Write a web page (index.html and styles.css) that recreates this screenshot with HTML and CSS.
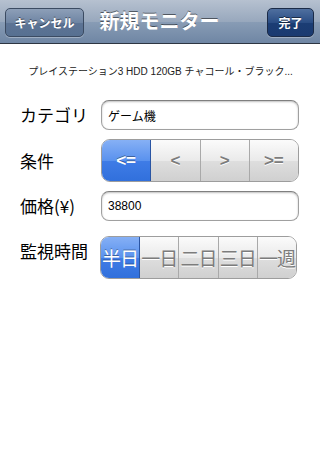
FILE: index.html
```html
<!DOCTYPE html>
<html lang="ja">
<head>
    <meta charset="UTF-8">
    <meta name="viewport" content="width=device-width, initial-scale=1.0">
    <title>新規モニター</title>
    <link rel="stylesheet" href="styles.css">
</head>
<body>
    <div class="navbar">
        <div class="nav-left">
            <button class="bar-button">キャンセル</button>
        </div>
        <div class="nav-title">新規モニター</div>
        <div class="nav-right">
            <button class="bar-button done">完了</button>
        </div>
    </div>

    <div class="product">プレイステーション3 HDD 120GB チャコール・ブラック...</div>

    <div class="form">
        <div class="row">
            <label class="label">カテゴリ</label>
            <input class="field" type="text" value="ゲーム機">
        </div>
        <div class="row">
            <label class="label">条件</label>
            <div class="segmented cond">
                <button class="seg selected">&lt;=</button>
                <button class="seg">&lt;</button>
                <button class="seg">&gt;</button>
                <button class="seg">&gt;=</button>
            </div>
        </div>
        <div class="row">
            <label class="label">価格(¥)</label>
            <input class="field" type="text" value="38800">
        </div>
        <div class="row top">
            <label class="label">監視時間</label>
            <div class="segmented period">
                <button class="seg selected">半日</button>
                <button class="seg">一日</button>
                <button class="seg">二日</button>
                <button class="seg">三日</button>
                <button class="seg">一週</button>
            </div>
        </div>
    </div>
</body>
</html>
```

FILE: styles.css
```css
* {
    box-sizing: border-box;
    margin: 0;
    padding: 0;
}

body {
    width: 320px;
    height: 460px;
    background: #ffffff;
    font-family: "Liberation Sans", "Noto Sans CJK JP", sans-serif;
    color: #000;
    overflow: hidden;
}

.navbar {
    height: 44px;
    display: grid;
    grid-template-columns: 1fr auto 1fr;
    align-items: center;
    padding: 0 6px 0 5px;
    background: linear-gradient(#b6c1d0 0%, #98a8bd 50%, #889cb5 51%, #6f86a4 100%);
    border-bottom: 1px solid #2d3642;
}

.nav-right {
    display: flex;
    justify-content: flex-end;
}

.nav-title {
    color: #fff;
    font-family: "Noto Sans CJK JP", sans-serif;
    font-weight: bold;
    font-size: 20px;
    text-shadow: 0 -1px 0 rgba(0, 0, 0, 0.5);
    padding-bottom: 2px;
}

.bar-button {
    height: 29px;
    width: 79px;
    border: 1px solid #3b4b62;
    border-radius: 5px;
    background: linear-gradient(#8d9fb8 0%, #6f85a3 50%, #5d7495 51%, #577091 100%);
    box-shadow: 0 1px 0 rgba(255, 255, 255, 0.3);
    color: #fff;
    font-family: "Noto Sans CJK JP", sans-serif;
    font-weight: bold;
    font-size: 12px;
    text-shadow: 0 -1px 0 rgba(0, 0, 0, 0.5);
    margin-top: 1px;
}

.bar-button.done {
    width: 47px;
    border-color: #1b2b47;
    background: linear-gradient(#4f6f9f 0%, #2a4d84 50%, #1b3d74 51%, #1a3a70 100%);
}

.product {
    height: 56px;
    line-height: 56px;
    text-align: center;
    font-family: "Liberation Sans", "Noto Sans CJK JP", sans-serif;
    font-size: 10px;
    color: #222;
    padding-left: 1px;
    white-space: nowrap;
}

.form {
    display: flex;
    flex-direction: column;
    gap: 9px;
    padding: 0 21px 0 20px;
}

.row {
    display: grid;
    grid-template-columns: 81px 1fr;
    align-items: center;
}

.row.top {
    align-items: start;
    margin-top: 6px;
}

.row.top .label {
    margin-top: 3px;
}

.label {
    font-family: "Noto Sans CJK JP", sans-serif;
    font-size: 17px;
    line-height: 24px;
}

.field {
    height: 30px;
    border: 1px solid #a0a0a0;
    border-top-color: #7f7f7f;
    border-radius: 8px;
    box-shadow: inset 0 1px 2px rgba(0, 0, 0, 0.25);
    padding: 0 6px;
    font-family: "Liberation Sans", "Noto Sans CJK JP", sans-serif;
    font-size: 12px;
    color: #000;
    outline: none;
}

.segmented {
    display: flex;
    height: 43px;
    border: 1px solid #9d9d9d;
    border-radius: 9px;
    overflow: hidden;
}

.segmented.period {
    margin-right: 2px;
    margin-left: -1px;
}

.seg {
    flex: 1;
    border: none;
    border-left: 1px solid #a9a9a9;
    background: linear-gradient(#fbfbfb 0%, #eaeaea 50%, #dedede 51%, #d0d0d0 100%);
    color: #7c7c7c;
    text-shadow: 0 1px 0 #fff;
    font-family: "Liberation Sans", sans-serif;
    font-weight: bold;
    font-size: 17px;
}

.seg:first-child {
    border-left: none;
}

.seg.selected {
    background: linear-gradient(#86b0f5 0%, #5a92ee 50%, #3f7ce6 51%, #3170dc 100%);
    color: #fff;
    text-shadow: 0 -1px 0 rgba(0, 0, 0, 0.35);
    border-right: 1px solid #2a55a3;
}

.seg.selected + .seg {
    border-left: none;
}

.period .seg {
    font-family: "Noto Sans CJK JP", sans-serif;
    font-weight: normal;
    font-size: 19px;
    letter-spacing: -1px;
    padding: 0;
}
```
